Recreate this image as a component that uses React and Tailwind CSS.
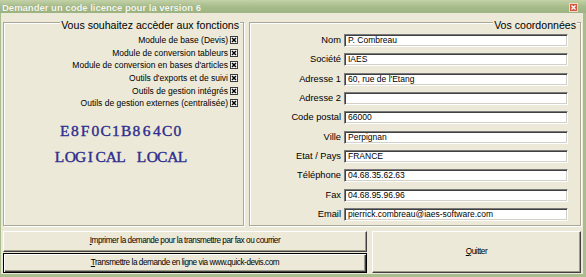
import React from "react";

const checks = [
  "Module de base (Devis)",
  "Module de conversion tableurs",
  "Module de conversion en bases d'articles",
  "Outils d'exports et de suivi",
  "Outils de gestion intégrés",
  "Outils de gestion externes (centralisée)",
];

const fields = [
  ["Nom", "P. Combreau"],
  ["Société", "IAES"],
  ["Adresse 1", "60, rue de l'Etang"],
  ["Adresse 2", ""],
  ["Code postal", "66000"],
  ["Ville", "Perpignan"],
  ["Etat / Pays", "FRANCE"],
  ["Téléphone", "04.68.35.62.63"],
  ["Fax", "04.68.95.96.96"],
  ["Email", "pierrick.combreau@iaes-software.com"],
];

function GroupBox({ title, className, children }) {
  return (
    <div
      className={`relative border border-[#aca899] shadow-[1px_1px_0_#fff,inset_1px_1px_0_#fff] ${className}`}
    >
      <span className="absolute top-[-4px] right-[3px] bg-[#ece9d8] px-[1px] text-[10.6px] leading-[12px] text-black whitespace-nowrap">
        {title}
      </span>
      {children}
    </div>
  );
}

function Check() {
  return (
    <svg width="8" height="8" viewBox="0 0 8 8" className="shrink-0">
      <rect x="0.5" y="0.5" width="7" height="7" fill="#fff" stroke="#3a3a3a" />
      <path d="M2 2 L6 6 M6 2 L2 6" stroke="#000" strokeWidth="1.5" />
    </svg>
  );
}

function Mono({ text, className }) {
  return (
    <div className={`flex justify-center font-['Liberation_Serif','Times_New_Roman',serif] text-[15.5px] text-[#2e2e8e] [-webkit-text-stroke:0.4px_#2e2e8e] leading-[18px] h-[18px] ${className}`}>
      {text.split("").map((ch, i) => (
        <span key={i} className="inline-block w-[10.25px] text-center">
          {ch === " " ? "\u00a0" : ch}
        </span>
      ))}
    </div>
  );
}

function Btn({ first, rest, className }) {
  return (
    <button
      className={`flex items-center justify-center bg-[#ece9d8] text-[8.2px] tracking-[-0.45px] text-black ${className}`}
    >
      <span>
        <span className="underline">{first}</span>
        {rest}
      </span>
    </button>
  );
}

export default function App() {
  return (
    <div className="w-[586px] h-[277px] flex flex-col overflow-hidden font-['Liberation_Sans',Arial,sans-serif]">
      <div className="h-[13px] shrink-0 flex items-start pl-[2px] pr-[8px] bg-gradient-to-b from-[#c3d1a8] via-[#a7bc8b] to-[#9db381] overflow-hidden">
        <span className="text-[9.5px] font-bold leading-[15px] text-[#f6f8f0] [text-shadow:0_0_1px_#7d9462] whitespace-nowrap">
          Demander un code licence pour la version 6
        </span>
        <div className="ml-auto mt-[3px] w-[9px] h-[9px] bg-[#d8573a] border border-[#f3d6cc] flex items-center justify-center">
          <svg width="5" height="5" viewBox="0 0 5 5">
            <path d="M0.5 0.5 L4.5 4.5 M4.5 0.5 L0.5 4.5" stroke="#fff" strokeWidth="1.3" />
          </svg>
        </div>
      </div>
      <div className="flex-1 flex flex-col bg-[#ece9d8] border-l border-r-[3px] border-b-[3px] border-[#a9bd8e] pl-[2px] pt-[9px]">
        <div className="flex gap-[5px] h-[204px] shrink-0">
          <GroupBox title="Vous souhaitez accèder aux fonctions" className="w-[241px]">
            <div className="flex flex-col pt-[11px] pr-[5px]">
              {checks.map((c) => (
                <div key={c} className="h-[12.6px] flex items-center justify-end gap-[2px]">
                  <span className="text-[8.5px] leading-[12px] text-black whitespace-nowrap">{c}</span>
                  <Check />
                </div>
              ))}
              <Mono text="E8F0C1B864C0" className="mt-[12.4px]" />
              <Mono text="LOGICAL LOCAL" className="mt-[8px]" />
            </div>
          </GroupBox>
          <GroupBox title="Vos coordonnées" className="w-[332px]">
            <div className="flex flex-col pt-[11px] gap-[6.33px]">
              {fields.map(([l, v]) => (
                <div key={l} className="h-[13px] flex items-center">
                  <span className="w-[91px] text-right text-[9.3px] leading-[12px] text-black whitespace-nowrap -mt-[1px]">
                    {l}
                  </span>
                  <div className="ml-[3px] w-[224px] h-[13px] bg-white border border-t-[#7a7a7a] border-l-[#7a7a7a] border-b-white border-r-white shadow-[inset_1px_1px_0_#404040,inset_-1px_-1px_0_#d4d0c8] flex items-center pl-[3px] text-[8.5px] leading-[11px] text-black whitespace-nowrap">
                    {v}
                  </div>
                </div>
              ))}
            </div>
          </GroupBox>
        </div>
        <div className="mt-[5px] flex gap-[5px] h-[42px] shrink-0">
          <div className="w-[364px] flex flex-col gap-[1px]">
            <Btn
              first="I"
              rest="mprimer la demande pour la transmettre par fax ou courrier"
              className="h-[21px] border border-t-white border-l-white border-b-[#404040] border-r-[#404040] shadow-[inset_-1px_-1px_0_#9d9a8a]"
            />
            <Btn
              first="T"
              rest="ransmettre la demande en ligne via www.quick-devis.com"
              className="h-[20px] border border-black shadow-[inset_1px_1px_0_#fff,inset_-1px_-1px_0_#404040,inset_-2px_-2px_0_#9d9a8a]"
            />
          </div>
          <Btn
            first="Q"
            rest="uitter"
            className="w-[209px] h-[42px] border border-t-white border-l-white border-b-[#404040] border-r-[#404040] shadow-[inset_-1px_-1px_0_#9d9a8a]"
          />
        </div>
      </div>
    </div>
  );
}
